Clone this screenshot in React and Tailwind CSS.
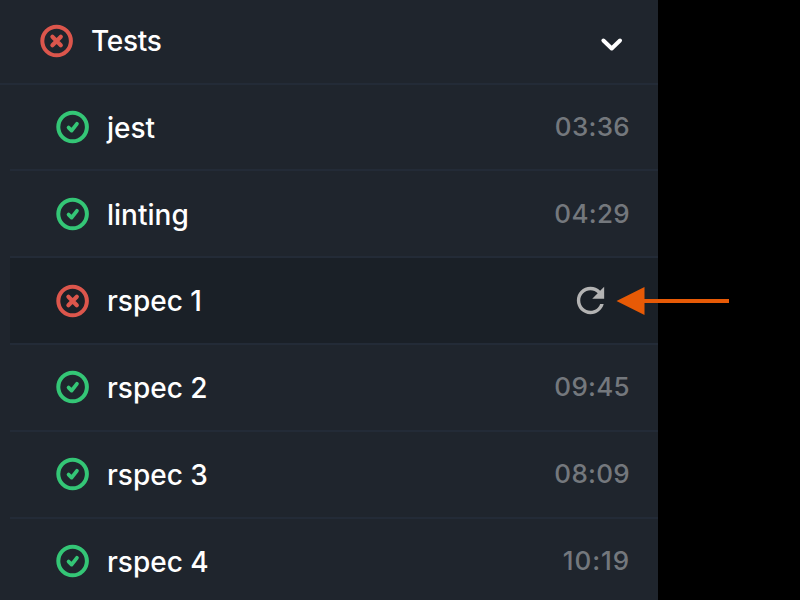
const jobs = [
  { name: 'jest', passed: true, time: '03:36' },
  { name: 'linting', passed: true, time: '04:29' },
  { name: 'rspec 1', passed: false },
  { name: 'rspec 2', passed: true, time: '09:45' },
  { name: 'rspec 3', passed: true, time: '08:09' },
  { name: 'rspec 4', passed: true, time: '10:19', wide: true },
];

function StatusIcon({ passed }) {
  return (
    <svg
      className={`size-[34px] shrink-0 ${passed ? 'text-[#34c676]' : 'text-[#dc564c]'}`}
      viewBox="0 0 34 34"
      fill="none"
      stroke="currentColor"
      strokeLinecap="round"
      strokeLinejoin="round"
    >
      <circle cx="16.6" cy="17" r="14.3" strokeWidth="4" />
      {passed ? (
        <path d="M12.6 17.6L15.6 20.6L20.9 13.8" strokeWidth="3.8" />
      ) : (
        <path d="M12.4 12.8L20.8 21.2M20.8 12.8L12.4 21.2" strokeWidth="4.2" />
      )}
    </svg>
  );
}

function RetryIcon() {
  return (
    <svg className="mr-[47px] size-[41px]" viewBox="0 0 24 24" fill="#b3b3b3">
      <path d="M17.65 6.35C16.2 4.9 14.21 4 12 4c-4.42 0-7.99 3.58-7.99 8s3.57 8 7.99 8c3.73 0 6.84-2.55 7.73-6h-2.08c-.82 2.33-3.04 4-5.65 4-3.31 0-6-2.69-6-6s2.69-6 6-6c1.66 0 3.14.69 4.22 1.78L13 11h7V4l-2.35 2.35z" />
    </svg>
  );
}

function Job({ name, passed, time, wide }) {
  return (
    <li
      className={`ml-[10px] flex h-[86.8px] items-center border-b-2 border-[#232b37] pl-[46px] ${
        passed ? '' : 'bg-[#1a2027]'
      }`}
    >
      <StatusIcon passed={passed} />
      <span className="ml-[17px] flex-1 pt-[1.6px] text-[28px] font-medium text-white">{name}</span>
      {time ? (
        <span
          className={`mr-[28px] pb-[1.6px] text-[26px] font-medium text-[#74787d] ${
            wide ? 'tracking-[0.9px]' : 'tracking-[0.3px]'
          }`}
        >
          {time}
        </span>
      ) : (
        <RetryIcon />
      )}
    </li>
  );
}

export default function App() {
  return (
    <div className="relative h-[600px] w-[800px] overflow-hidden bg-black font-['Inter',sans-serif]">
      <section className="h-full w-[658px] overflow-hidden bg-[#1f252d]">
        <header className="flex h-[84.7px] items-center border-b-2 border-[#232b37] pb-[1px] pl-[40px]">
          <StatusIcon passed={false} />
          <h2 className="ml-[17px] flex-1 text-[28px] font-medium tracking-[-0.3px] text-white">Tests</h2>
          <svg className="mt-[6px] mr-[34px] size-6" viewBox="0 0 24 24" fill="none" stroke="white" strokeWidth="4" strokeLinecap="round" strokeLinejoin="round">
            <path d="M3.4 8.5L11.7 16.5L20 8.5" />
          </svg>
        </header>
        <ul>
          {jobs.map((job) => (
            <Job key={job.name} {...job} />
          ))}
        </ul>
      </section>
      <svg className="absolute top-[286px] left-[616px] h-[30px] w-[114px]" viewBox="0 0 114 30" fill="#e75a06">
        <path d="M0.5 15L28.5 1V13H113V17H28.5V29Z" />
      </svg>
    </div>
  );
}
